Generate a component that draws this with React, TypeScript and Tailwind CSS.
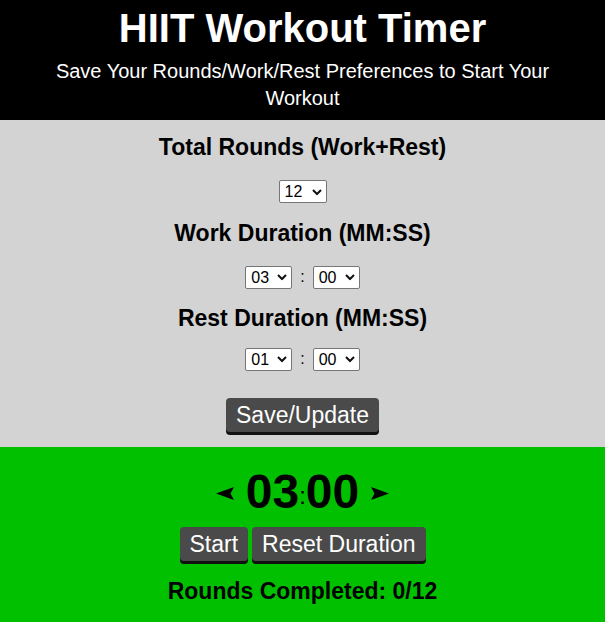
import React from "react";

function Chevron() {
  return (
    <svg
      width="10"
      height="7"
      viewBox="0 0 10 7"
      className="pointer-events-none absolute right-[5px] top-1/2 -translate-y-1/2"
    >
      <path d="M1 1.5 L5 5.5 L9 1.5" fill="none" stroke="#111" strokeWidth="2" />
    </svg>
  );
}

function Sel({ value, options, w }: { value: string; options: string[]; w: string }) {
  return (
    <div className={`relative inline-flex h-[23px] ${w}`}>
      <select
        defaultValue={value}
        className="h-full w-full appearance-none rounded-[2px] border border-[#767676] bg-white pl-[5px] pr-[18px] text-[16px] leading-[19px] text-black"
      >
        {options.map((o) => (
          <option key={o} value={o}>
            {o}
          </option>
        ))}
      </select>
      <Chevron />
    </div>
  );
}

const mins = Array.from({ length: 60 }, (_, i) => String(i).padStart(2, "0"));
const rounds = Array.from({ length: 30 }, (_, i) => String(i + 1));

function Arrow({ dir }: { dir: "l" | "r" }) {
  return (
    <svg width="18" height="13" viewBox="0 0 18 13">
      {dir === "l" ? (
        <path d="M0 6.5 L18 0 L14.5 6.5 L18 13 Z" fill="#000" />
      ) : (
        <path d="M18 6.5 L0 0 L3.5 6.5 L0 13 Z" fill="#000" />
      )}
    </svg>
  );
}

const btn =
  "rounded-[4px] bg-[#4a4a4a] px-[10px] py-[4px] text-[23px] leading-[26px] text-white shadow-[0_3px_0_#111]";

export default function App() {
  return (
    <div className="min-h-[622px] bg-[#00c000] font-['Liberation_Sans',Arial,sans-serif]">
      <header className="bg-black px-[40px] pt-[5px] pb-[8px] text-center text-white">
        <h1 className="text-[40px] font-bold leading-[46px]">HIIT Workout Timer</h1>
        <p className="mt-[7px] text-[20px] leading-[27px]">
          Save Your Rounds/Work/Rest Preferences to Start Your Workout
        </p>
      </header>

      <section className="flex flex-col items-center bg-[#d3d3d3] pt-[14px] pb-[15px] text-black">
        <h3 className="text-[23px] font-bold leading-[26px]">Total Rounds (Work+Rest)</h3>
        <div className="mt-[20px]">
          <Sel value="12" options={rounds} w="w-[48px]" />
        </div>
        <h3 className="mt-[16px] text-[23px] font-bold leading-[26px]">Work Duration (MM:SS)</h3>
        <div className="mt-[19px] flex items-center gap-[8px] text-[16px]">
          <Sel value="03" options={mins} w="w-[47px]" />
          <span>:</span>
          <Sel value="00" options={mins} w="w-[47px]" />
        </div>
        <h3 className="mt-[16px] text-[23px] font-bold leading-[26px]">Rest Duration (MM:SS)</h3>
        <div className="mt-[16px] flex items-center gap-[8px] text-[16px]">
          <Sel value="01" options={mins} w="w-[47px]" />
          <span>:</span>
          <Sel value="00" options={mins} w="w-[47px]" />
        </div>
        <button className={`mt-[27px] ${btn}`}>Save/Update</button>
      </section>

      <section className="flex flex-col items-center bg-[#00c000] pt-[17px] pb-[16px] text-black">
        <div className="flex items-center gap-[12px]">
          <Arrow dir="l" />
          <span className="text-[48px] font-bold leading-[55px]">
            03<span className="align-middle text-[24px] font-normal">:</span>00
          </span>
          <Arrow dir="r" />
        </div>
        <div className="mt-[4px] flex gap-[4px]">
          <button className={btn}>Start</button>
          <button className={btn}>Reset Duration</button>
        </div>
        <p className="mt-[17px] text-[23px] font-bold leading-[26px]">Rounds Completed: 0/12</p>
      </section>
    </div>
  );
}
